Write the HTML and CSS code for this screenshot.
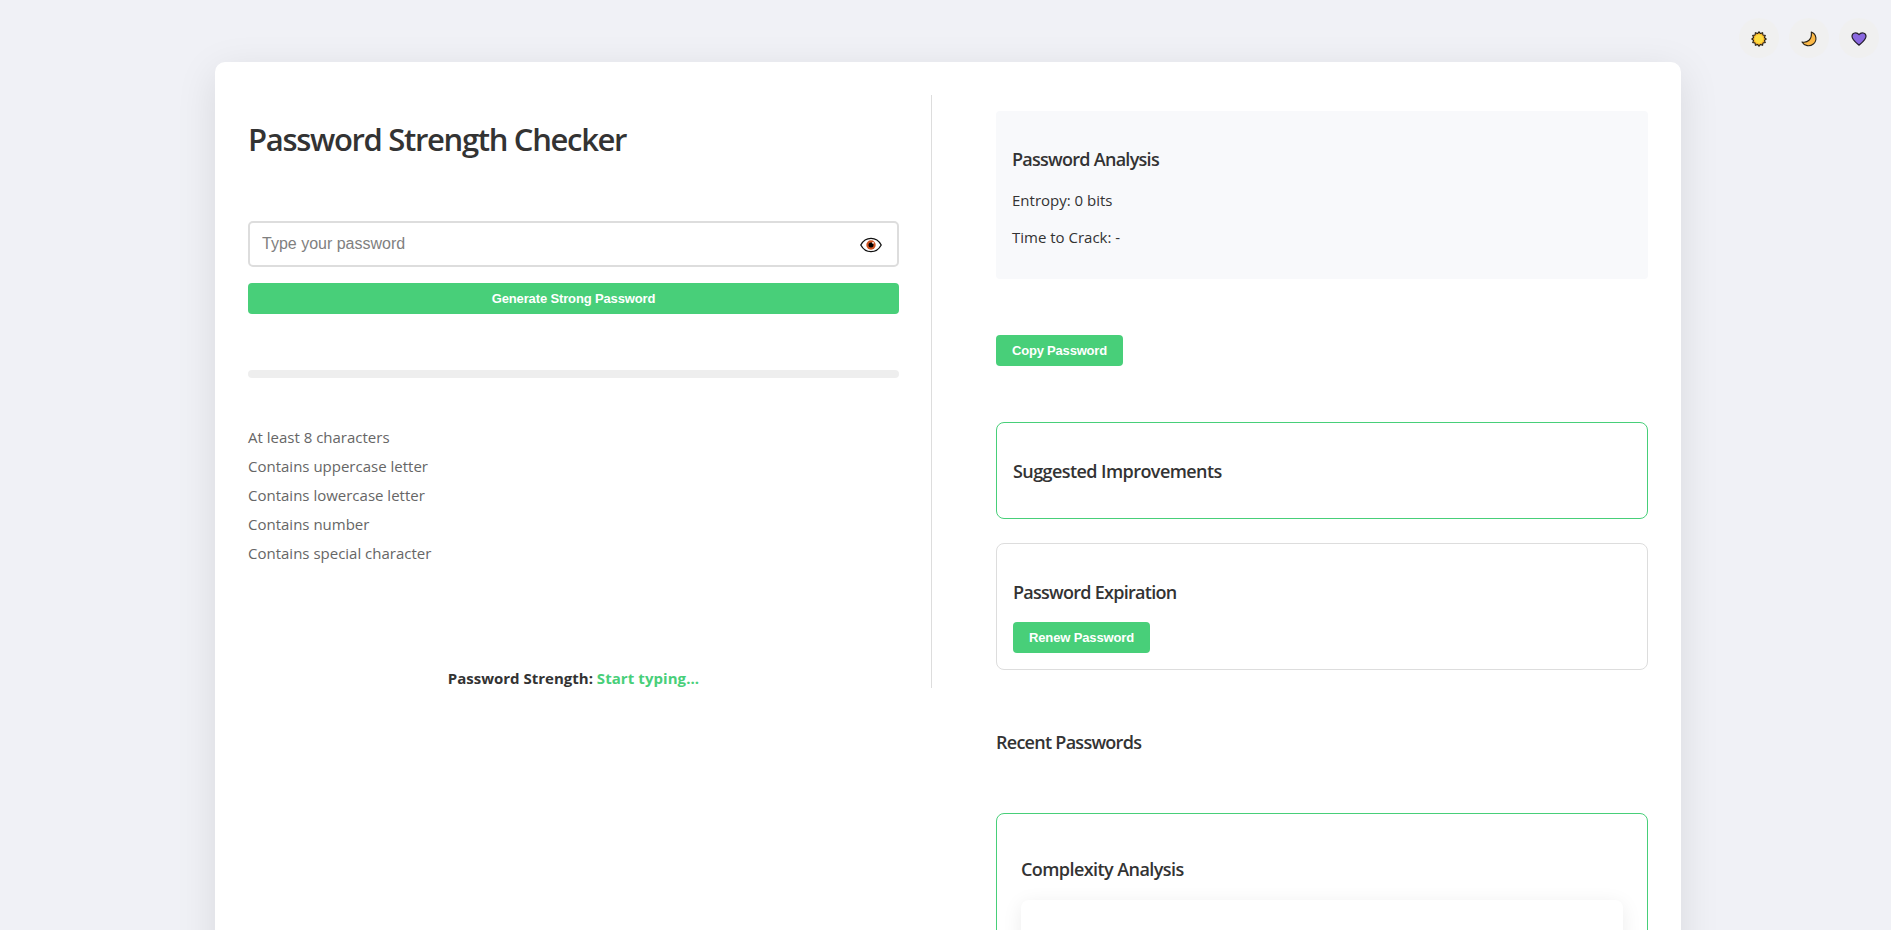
FILE: index.html
```html
<!DOCTYPE html>
<html lang="en">
<head>
<meta charset="utf-8">
<title>Password Strength Checker</title>
<link rel="stylesheet" href="styles.css">
</head>
<body>
<nav class="theme-switch">
  <button class="theme-btn" aria-label="Light theme">
    <svg width="16" height="16" viewBox="-8 -8 16 16"><path d="M7.200 0L5.410 1.450 6.240 3.600 3.960 3.960 3.600 6.240 1.450 5.410 0 7.200-1.450 5.410-3.600 6.240-3.960 3.960-6.240 3.600-5.410 1.450-7.200 0-5.410-1.450-6.240-3.600-3.960-3.960-3.600-6.240-1.450-5.410 0-7.200 1.450-5.410 3.600-6.240 3.960-3.960 6.240-3.600 5.410-1.450z" fill="#f0a52a" stroke="#2a2418" stroke-width="1.100"/><circle r="4.900" fill="#f9c437"/><circle r="4.200" fill="#fddc40"/></svg>
  </button>
  <button class="theme-btn" aria-label="Dark theme">
    <svg width="16" height="16" viewBox="0 0 16 16"><path d="M10.300 1c5.500 2.200 6 8.700 2 12C8.800 15.800 3.300 15.200 1 11c5.500 1.200 10.200-2.500 9.300-10z" fill="#fbb847" stroke="#2a2418" stroke-width="1.100" stroke-linejoin="round"/></svg>
  </button>
  <button class="theme-btn" aria-label="Purple theme">
    <svg width="16" height="16" viewBox="0 0 16 16"><path d="M8 14.200C5.500 12 1 8.700 1 5.200 1 1.600 5.800.700 8 3.700c2.200-3 7-2.100 7 1.500 0 3.500-4.500 6.800-7 9z" fill="#8a68e0" stroke="#25202e" stroke-width="1.200" stroke-linejoin="round"/></svg>
  </button>
</nav>
<main class="card">
  <section class="checker">
    <h1 class="title">Password Strength Checker</h1>
    <div class="field">
      <input class="field-input" type="password" placeholder="Type your password">
      <svg class="field-eye" width="22" height="16" viewBox="0 0 22 16"><path d="M.800 8C5.500-.900 16.500-.900 21.200 8 16.500 16.900 5.500 16.900.800 8z" fill="#fff" stroke="#111" stroke-width="1.300"/><circle cx="11" cy="8" r="4.700" fill="#d05422"/><circle cx="11" cy="8" r="2.500" fill="#000"/><circle cx="13" cy="5.800" r=".9" fill="#fff"/></svg>
    </div>
    <button class="btn btn-wide">Generate Strong Password</button>
    <div class="meter"></div>
    <ul class="rules">
      <li>At least 8 characters</li>
      <li>Contains uppercase letter</li>
      <li>Contains lowercase letter</li>
      <li>Contains number</li>
      <li>Contains special character</li>
    </ul>
    <p class="strength">Password Strength: <span class="strength-value">Start typing...</span></p>
  </section>
  <section class="details">
    <div class="analysis">
      <h3 class="heading">Password Analysis</h3>
      <p class="stat">Entropy: 0 bits</p>
      <p class="stat">Time to Crack: -</p>
    </div>
    <button class="btn copy">Copy Password</button>
    <div class="panel panel-accent suggestions">
      <h3 class="heading heading-loose">Suggested Improvements</h3>
    </div>
    <div class="panel expiration">
      <h3 class="heading">Password Expiration</h3>
      <button class="btn">Renew Password</button>
    </div>
    <h3 class="heading recent">Recent Passwords</h3>
    <div class="panel panel-accent complexity">
      <h3 class="heading heading-loose">Complexity Analysis</h3>
      <div class="chart"></div>
    </div>
  </section>
</main>
</body>
</html>
```
FILE: styles.css
```css
* { box-sizing: border-box; }

body {
  margin: 0;
  height: 930px;
  overflow: hidden;
  padding-top: 62px;
  background: #f0f1f6;
  color: #333;
  font-family: "Open Sans", "Noto Sans", sans-serif;
  font-size: 15px;
}

h1, h3, p, ul { margin: 0; padding: 0; }

.theme-switch {
  position: absolute;
  top: 18px;
  right: 12px;
  display: flex;
  gap: 10px;
}

.theme-btn {
  display: flex;
  align-items: center;
  justify-content: center;
  width: 40px;
  height: 40px;
  padding: 2px 0 0;
  border: 0;
  border-radius: 50%;
  background: #f0f0f0;
}

.card {
  display: grid;
  grid-template-columns: 1fr 1fr;
  gap: 32px;
  align-items: start;
  width: 1466px;
  height: 1400px;
  margin-left: 215px;
  padding: 33px;
  border-radius: 10px;
  background: #fff;
  box-shadow: 0 10px 40px rgba(0, 0, 0, 0.1);
}

.checker {
  display: flex;
  flex-direction: column;
  height: 593px;
  padding-right: 32px;
  border-right: 1px solid #ddd;
}

.title {
  margin-top: 23px;
  font-size: 31px;
  font-weight: 600;
  line-height: 43px;
  letter-spacing: -1.32px;
}

.field {
  position: relative;
  margin-top: 60px;
}

.field-input {
  display: block;
  width: 100%;
  height: 46px;
  padding: 0 12px;
  border: 2px solid #ddd;
  border-radius: 5px;
  background: #fff;
  font: 16px "Liberation Sans", Arial, sans-serif;
}

.field-input::placeholder { color: #808080; }

.field-eye {
  position: absolute;
  top: 16px;
  right: 17.5px;
}

.btn {
  flex: none;
  height: 31px;
  padding: 0 16px;
  border: 0;
  border-radius: 4px;
  background: #48cf79;
  color: #fff;
  font: bold 13px "Liberation Sans", Arial, sans-serif;
  letter-spacing: -0.14px;
}

.btn-wide {
  width: 100%;
  margin-top: 16px;
}

.meter {
  flex: none;
  height: 8px;
  margin-top: 56px;
  border-radius: 4px;
  background: #eee;
}

.rules {
  margin-top: 45px;
  color: #666;
  line-height: 29px;
  list-style: none;
}

.strength {
  margin-top: 96px;
  font-weight: 700;
  line-height: 29px;
  text-align: center;
}

.strength-value {
  color: #48cf79;
  letter-spacing: 0.07px;
}

.details {
  display: flex;
  flex-direction: column;
  align-items: stretch;
  padding: 16px 0 0 32px;
}

.heading {
  font-size: 18px;
  font-weight: 600;
  line-height: 24px;
  letter-spacing: -0.73px;
}

.heading-loose { letter-spacing: -0.57px; }

.analysis {
  height: 168px;
  padding: 36px 16px 0;
  border-radius: 4px;
  background: #f8f9fb;
}

.stat {
  margin-top: 16px;
  line-height: 21px;
}

.heading + .stat { margin-top: 19px; }

.copy {
  align-self: flex-start;
  margin-top: 56px;
  letter-spacing: -0.2px;
}

.panel {
  padding: 36px 16px 0;
  border: 1px solid #ddd;
  border-radius: 8px;
}

.panel-accent { border-color: #48cf79; }

.suggestions {
  height: 97px;
  margin-top: 56px;
}

.expiration {
  height: 127px;
  margin-top: 24px;
}

.expiration .btn {
  display: block;
  margin-top: 18px;
}

.recent { margin-top: 60px; }

.complexity {
  height: 420px;
  margin-top: 59px;
  padding: 43px 24px 24px;
}

.chart {
  height: 300px;
  margin-top: 19px;
  border-radius: 8px;
  background: #fff;
  box-shadow: 0 4px 20px rgba(0, 0, 0, 0.08);
}
```
